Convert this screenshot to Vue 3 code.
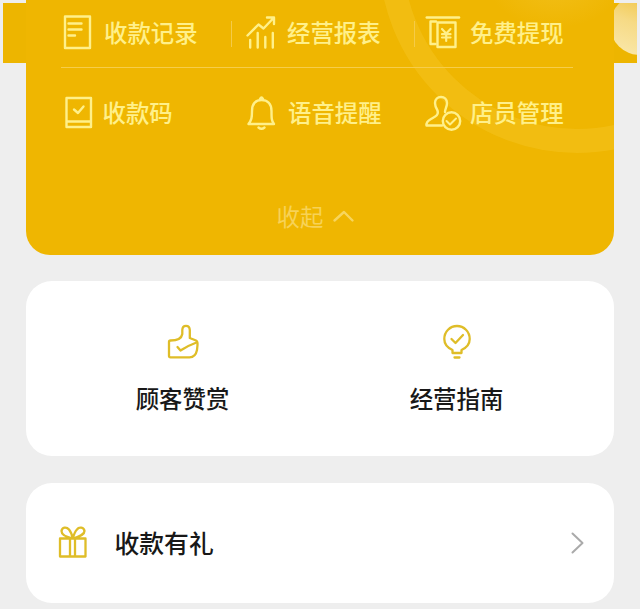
<script setup>
const topActions = [
  { name: 'record', label: '收款记录' },
  { name: 'report', label: '经营报表' },
  { name: 'cash', label: '免费提现' },
]
const bottomActions = [
  { name: 'code', label: '收款码' },
  { name: 'bell', label: '语音提醒' },
  { name: 'staff', label: '店员管理' },
]
const rows = [topActions, bottomActions]
</script>

<template>
  <main class="page">
    <div class="band"><i class="glow"></i></div>
    <section class="hero">
      <i class="ring"></i>
      <i class="sheen"></i>
      <div v-for="(row, r) in rows" :key="r" class="row" :class="{ first: r === 0 }">
        <div v-for="a in row" :key="a.name" class="action" :class="a.name">
          <svg class="icon" viewBox="0 0 42 40" width="42" height="40">
            <g v-if="a.name === 'record'">
              <path d="M3 3.500H28V35H3Z" />
              <path d="M6.500 10.500H19.500M6.500 16.500H19.500M6.500 22.500H13" />
            </g>
            <g v-else-if="a.name === 'report'">
              <path d="M2.500 22.500L13.500 11.500L18.500 15.500L28.500 5M22 4.500H29V11" />
              <path d="M5.200 27V34.500M12.700 20V34.500M20.300 24V34.500M27.800 20V34.500" />
            </g>
            <g v-else-if="a.name === 'cash'">
              <path d="M-1.200 4.500H31" stroke-width="2.600" />
              <path d="M7.500 31H2.500V8.500H8" />
              <path d="M9.500 9.500H27.500V34H9.500Z" />
              <path d="M14 16L18.200 20.500L22.500 16M18.200 20.500V28M14 21.200H22.500M14 24.500H22.500" stroke-width="2.200" />
            </g>
            <g v-else-if="a.name === 'code'">
              <path d="M4.500 5H29V34H4.500ZM4.500 28.500H29M12 16.500L16 20L21.500 13.500" />
            </g>
            <g v-else-if="a.name === 'bell'">
              <path d="M3.500 31H29C26.500 28 26.500 25 26.500 18C26.500 10.500 22 7 16.500 7S7 10.500 7 18C7 25 6.500 27 3.500 31ZM15 6Q16.500 3 18 6M13.500 34.500Q16.500 37 19.500 34.500" />
            </g>
            <g v-else>
              <path d="M14 32.500H-1.500C-2 29.500 -.5 28 3 26C7.500 23.500 11 22 9.500 17.500C7.500 14.500 7 12.500 7 10C7 6 9.500 4 13 4S19 6.500 19 10C19 14 17 16 17 19" />
              <circle cx="23.500" cy="28" r="8.700" />
              <path d="M18.500 28L22 31.500L28 25.500" stroke-width="2" />
            </g>
          </svg>
          <span class="label">{{ a.label }}</span>
        </div>
      </div>
      <div class="collapse">
        <span>收起</span>
        <svg viewBox="0 0 22 14" width="22" height="14"><path d="M1.500 11.500L11 3L19.500 11.500" /></svg>
      </div>
    </section>

    <section class="card pair">
      <div class="entry">
        <svg class="gold" viewBox="0 0 36 38" width="36" height="38">
          <path d="M5.500 17.500C11 17.500 16.500 16 17.300 11V7C17.500 1.500 24.500 1.500 24.800 7V15L31 17.500C32.500 18.200 32.700 19.500 32.500 22L32 27C31 32 28.500 34.300 24.500 34.300H5.500Q4 34.300 4 33V19Q4 17.500 5.500 17.500Z" />
          <path d="M12.500 24L15.500 27.500Q22 23 31.500 19.500" />
        </svg>
        <span>顾客赞赏</span>
      </div>
      <div class="entry">
        <svg class="gold" viewBox="0 0 36 38" width="36" height="38">
          <path d="M13.500 30V27C8 24.500 5.300 20.500 5.300 16C5.300 8.500 11 3 18 3S30.700 8.500 30.700 16C30.700 20.500 28 24.500 22.500 27V30ZM15.500 34.500H20.500" />
          <path d="M12.500 16L16.500 20L24 12" />
        </svg>
        <span>经营指南</span>
      </div>
    </section>

    <section class="card gift">
      <svg class="gold" viewBox="0 0 32 36" width="32" height="36">
        <path d="M3 13.500H28.500V31.500H3ZM13 14V31.500M18 14V31.500M15.700 13.500C9 12 4.500 9 4.500 6C5 2 9.500 1.500 12 4.500Q14.500 7.500 15.700 13.500C17 9 18 6.500 20 4.500C22 1.500 27 2 27.500 6C27.500 9 22 12 15.700 13.500Z" />
      </svg>
      <span class="title">收款有礼</span>
      <svg class="arrow" viewBox="0 0 14 22" width="14" height="22"><path d="M1.500 1.500L11.500 11L1.500 20.500" /></svg>
    </section>
  </main>
</template>

<style>
body { margin: 0; background: #eee; }
</style>

<style scoped>
.page {
  position: relative;
  box-sizing: border-box;
  width: 640px;
  height: 609px;
  padding: 0 26px;
  overflow: hidden;
  background: #eee;
  font-family: "Noto Sans CJK SC", sans-serif;
}
svg { display: block; flex: none; overflow: visible; fill: none; stroke-linecap: round; stroke-linejoin: round; }
.band {
  position: absolute;
  left: 3px;
  top: 3px;
  width: 634px;
  height: 60px;
  overflow: hidden;
  background: #edb500;
}
.glow {
  position: absolute;
  right: -33px;
  top: -8px;
  width: 60px;
  height: 60px;
  border-radius: 50%;
  background: linear-gradient(20deg, #fae9ae, #f6da85 50%, #f0c138 95%);
}
.hero {
  position: relative;
  box-sizing: border-box;
  height: 255px;
  overflow: hidden;
  border-radius: 0 0 24px 24px;
  background: #efb601;
}
.ring {
  position: absolute;
  left: 353px;
  top: -243px;
  width: 348px;
  height: 348px;
  border: 24px solid rgba(246, 201, 48, .36);
  border-radius: 50%;
}
.sheen {
  position: absolute;
  left: 460px;
  top: -70px;
  width: 138px;
  height: 98px;
  border-radius: 50%;
  background: radial-gradient(closest-side, rgba(247, 206, 66, .4), rgba(247, 206, 66, 0));
}
.row {
  position: relative;
  display: grid;
  grid-template-columns: repeat(3, 183px);
  box-sizing: border-box;
  width: 512px;
  height: 80px;
  margin-left: 35px;
  padding: 25px 0 0 1px;
}
.row.first { height: 68px; padding-top: 13px; border-bottom: 1px solid #f6cd4b; }
.action { display: flex; position: relative; height: 40px; align-items: center; }
.first .action + .action::before {
  content: "";
  position: absolute;
  left: -14px;
  top: 8px;
  width: 1px;
  height: 26px;
  background: #f5cb48;
}
.icon { stroke: #fff08a; stroke-width: 2.4; }
.label { margin-top: -3px; color: #fff08a; font-size: 23.4px; font-weight: 500; line-height: 40px; white-space: nowrap; }
.code .label { margin-left: -1.5px; }
.bell .label { margin-left: 1px; }
.collapse {
  display: flex;
  align-items: center;
  justify-content: center;
  gap: 10px;
  margin-top: 48px;
  height: 40px;
  padding-right: 8px;
  color: #f7d257;
  font-size: 23.4px;
}
.collapse svg { stroke: #f7d55d; stroke-width: 2.4; }
.card { box-sizing: border-box; background: #fff; border-radius: 26px; }
.pair {
  display: grid;
  grid-template-columns: 274px 274px;
  height: 175px;
  margin-top: 26px;
  padding-left: 19.5px;
}
.entry {
  display: flex;
  flex-direction: column;
  align-items: center;
  padding-top: 42px;
  gap: 17px;
  color: #181818;
  font-size: 23.4px;
  font-weight: 500;
  line-height: 40px;
}
.gold { stroke: #dfbd28; stroke-width: 2.3; }
.gift { display: flex; align-items: center; height: 120px; margin-top: 27px; padding: 0 29px 0 31px; }
.title { margin-left: 25.5px; margin-top: -2px; color: #181818; font-size: 24.8px; font-weight: 500; line-height: 40px; }
.arrow { margin-left: auto; stroke: #aaa; stroke-width: 2; }
</style>
